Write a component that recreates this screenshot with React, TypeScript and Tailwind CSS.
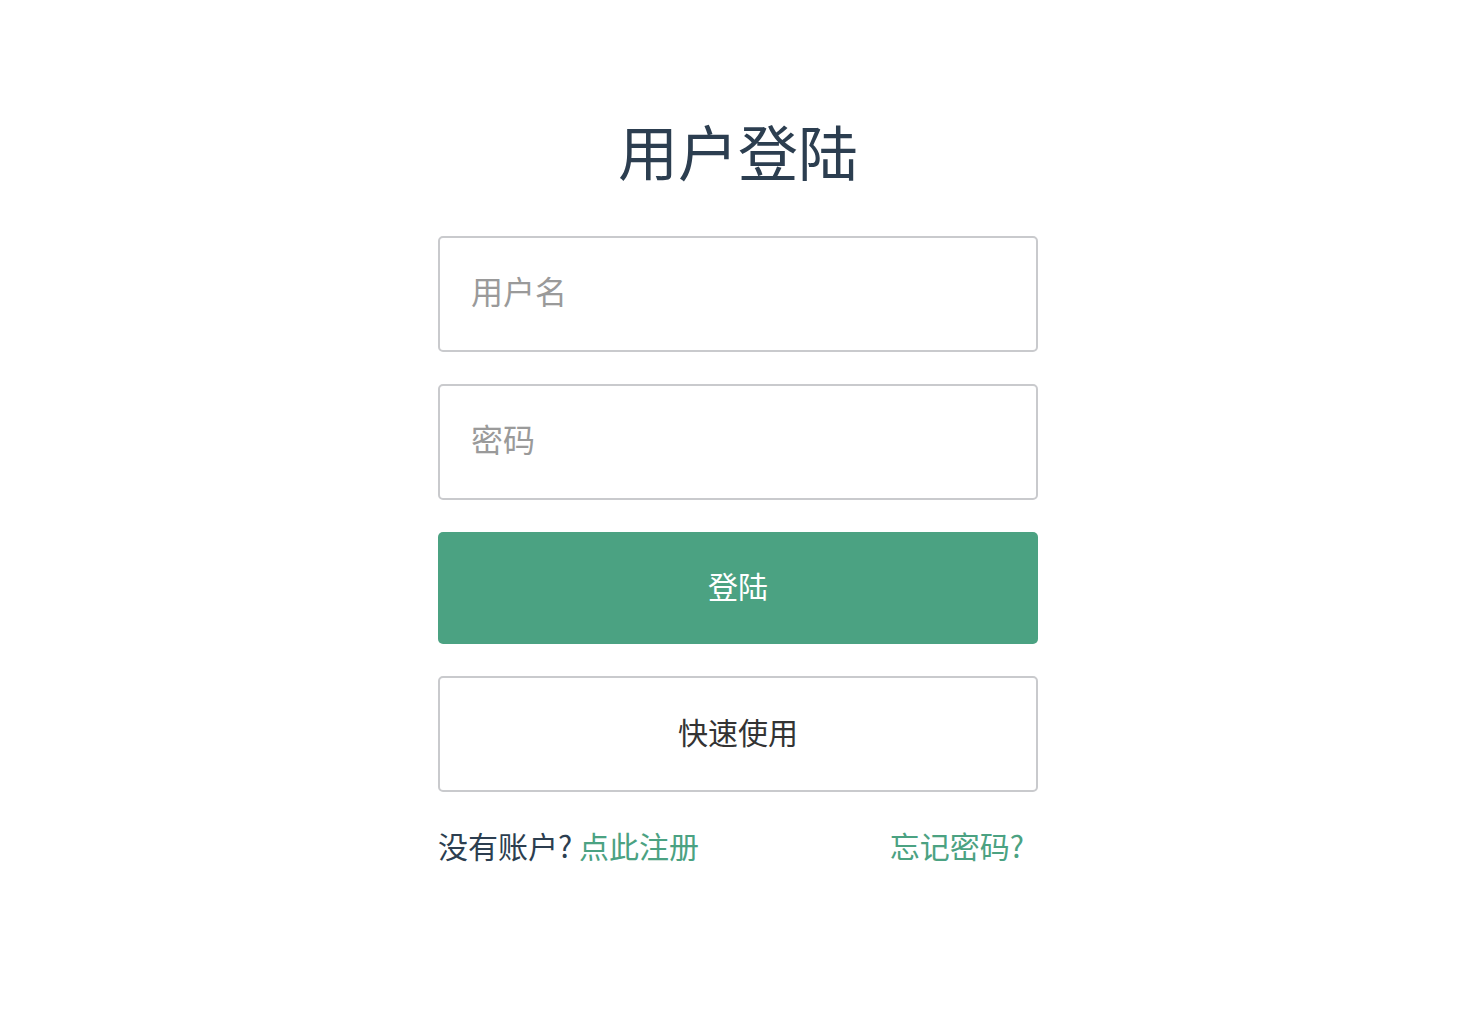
import React from "react";

const font = { fontFamily: '"Noto Sans CJK SC", "Noto Sans", sans-serif' };

export default function App() {
  return (
    <div className="flex min-h-[1028px] w-full justify-center bg-white pl-[2px]" style={font}>
      <div className="flex w-[600px] flex-col pt-[110px]">
        <h1 className="text-center text-[60px] leading-[80px] font-normal text-[#2c3e50]">用户登陆</h1>
        <div className="mt-[46px] flex flex-col gap-[32px]">
          <input
            className="h-[116px] w-full rounded-[5px] border-2 border-[#c9cacd] px-[31px] pb-[8px] text-[32px] text-[#333] outline-none placeholder:text-[#9a9a9a]"
            placeholder="用户名"
          />
          <input
            type="password"
            className="h-[116px] w-full rounded-[5px] border-2 border-[#c9cacd] px-[31px] pb-[8px] text-[32px] text-[#333] outline-none placeholder:text-[#9a9a9a]"
            placeholder="密码"
          />
          <button className="h-[112px] w-full rounded-[5px] bg-[#4ba282] pb-[6px] text-[30px] text-white">登陆</button>
          <button className="h-[116px] w-full rounded-[5px] border-2 border-[#c9cacd] bg-white pb-[6px] text-[30px] text-[#333]">快速使用</button>
        </div>
        <div className="mt-[28px] flex items-center justify-between text-[30px] leading-[50px]">
          <div className="text-[#2c3e50]">
            没有账户? <span className="text-[#4ba282]">点此注册</span>
          </div>
          <div className="pr-[14px] text-[#4ba282]">忘记密码?</div>
        </div>
      </div>
    </div>
  );
}
